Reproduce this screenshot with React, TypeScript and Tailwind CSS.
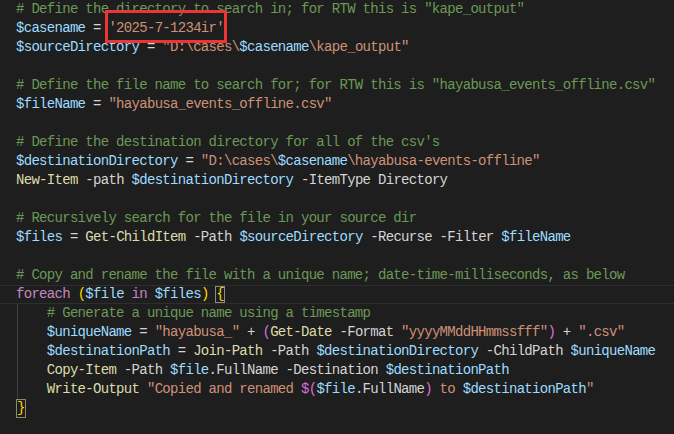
import React from 'react'

type Tok = [string, string]

const C = 'text-[#6a9955]'
const V = 'text-[#9cdcfe]'
const S = 'text-[#ce9178]'
const F = 'text-[#dcdcaa]'
const P = 'text-[#d4d4d4]'
const K = 'text-[#c586c0]'
const B1 = 'text-[#ffd700]'
const B2 = 'text-[#da70d6]'

const lines: Tok[][] = [
  [['# Define the directory to search in; for RTW this is "kape_output"', C]],
  [['$casename', V], [' = ', P], ["'2025-7-1234ir'", S]],
  [['$sourceDirectory', V], [' = ', P], ['"D:\\cases\\', S], ['$casename', V], ['\\kape_output"', S]],
  [],
  [['# Define the file name to search for; for RTW this is "hayabusa_events_offline.csv"', C]],
  [['$fileName', V], [' = ', P], ['"hayabusa_events_offline.csv"', S]],
  [],
  [["# Define the destination directory for all of the csv's", C]],
  [['$destinationDirectory', V], [' = ', P], ['"D:\\cases\\', S], ['$casename', V], ['\\hayabusa-events-offline"', S]],
  [['New-Item', F], [' -path ', P], ['$destinationDirectory', V], [' -ItemType Directory', P]],
  [],
  [['# Recursively search for the file in your source dir', C]],
  [['$files', V], [' = ', P], ['Get-ChildItem', F], [' -Path ', P], ['$sourceDirectory', V], [' -Recurse -Filter ', P], ['$fileName', V]],
  [],
  [['# Copy and rename the file with a unique name; date-time-milliseconds, as below', C]],
  [['foreach', K], [' ', P], ['(', B1], ['$file', V], [' ', P], ['in', K], [' ', P], ['$files', V], [')', B1], [' ', P]],
  [['    ', P], ['# Generate a unique name using a timestamp', C]],
  [['    ', P], ['$uniqueName', V], [' = ', P], ['"hayabusa_"', S], [' + ', P], ['(', B2], ['Get-Date', F], [' -Format ', P], ['"yyyyMMddHHmmssfff"', S], [')', B2], [' + ', P], ['".csv"', S]],
  [['    ', P], ['$destinationPath', V], [' = ', P], ['Join-Path', F], [' -Path ', P], ['$destinationDirectory', V], [' -ChildPath ', P], ['$uniqueName', V]],
  [['    ', P], ['Copy-Item', F], [' -Path ', P], ['$file', V], ['.FullName -Destination ', P], ['$destinationPath', V]],
  [['    ', P], ['Write-Output', F], [' ', P], ['"Copied and renamed ', S], ['$(', B2], ['$file', V], ['.FullName', P], [')', B2], [' to ', S], ['$destinationPath', V], ['"', S]],
  [],
]

function Line({ toks, idx }: { toks: Tok[]; idx: number }) {
  const current = idx === 15
  return (
    <div
      className={
        current
          ? 'relative h-[19px] leading-[17px] whitespace-pre border-y border-[#2e2e2e] pl-[16px]'
          : 'relative h-[19px] leading-[19px] whitespace-pre pl-[16px]'
      }
    >
      {toks.map((t, i) => (
        <span key={i} className={t[1]}>
          {t[0]}
        </span>
      ))}
      {idx === 15 && (
        <span className="inline-block h-[17px] border border-[#8a8a8a] text-[#ffd700] leading-[15px] -ml-[1px]">{'{'}</span>
      )}
      {idx === 21 && (
        <span className="inline-block h-[19px] border border-[#8a8a6a] text-[#ffd700] leading-[17px]">{'}'}</span>
      )}
    </div>
  )
}

export default function App() {
  return (
    <div className="relative w-[674px] h-[434px] overflow-hidden bg-[#1e1e1e] text-[#d4d4d4] font-['Liberation_Mono',monospace] text-[14px] tracking-[-0.7px]">
      {lines.map((l, i) => (
        <Line key={i} toks={l} idx={i} />
      ))}
      {/* indent guide for foreach body */}
      <div className="absolute left-[17px] top-[304px] w-px h-[95px] bg-[#404040]" />
      {/* highlight box */}
      <div className="absolute left-[105px] top-[10px] w-[122px] h-[33px] border-[3px] border-[#ee3535]" />
    </div>
  )
}
